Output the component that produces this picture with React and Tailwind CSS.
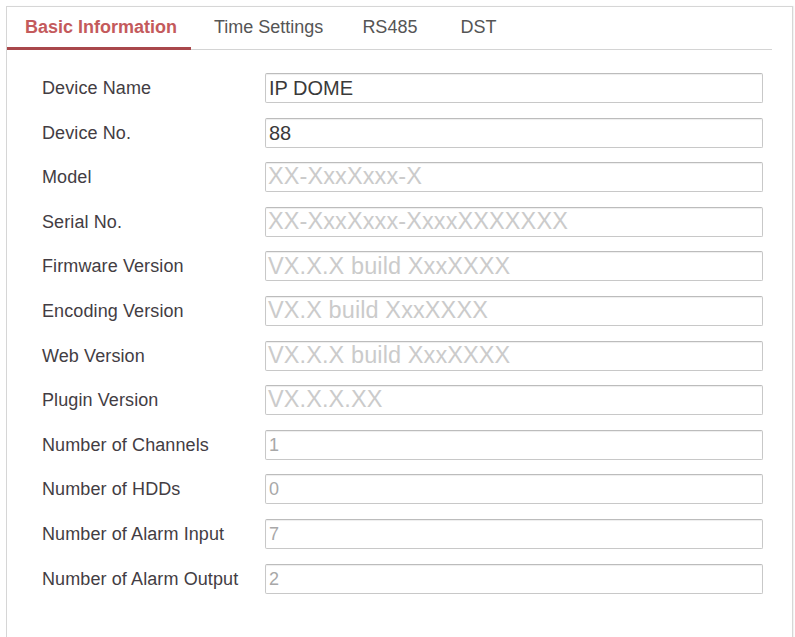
import { useState } from 'react';

const tabs = [
  { name: 'Basic Information', gap: 'ml-0' },
  { name: 'Time Settings', gap: 'ml-[23px]' },
  { name: 'RS485', gap: 'ml-[39px]' },
  { name: 'DST', gap: 'ml-[43px]' },
];

// kind: value = editable text, info = greyed placeholder, count = small greyed number
const fields = [
  { label: 'Device Name', value: 'IP DOME', kind: 'value' },
  { label: 'Device No.', value: '88', kind: 'value' },
  { label: 'Model', value: 'XX-XxxXxxx-X', kind: 'info' },
  { label: 'Serial No.', value: 'XX-XxxXxxx-XxxxXXXXXXX', kind: 'info' },
  { label: 'Firmware Version', value: 'VX.X.X build XxxXXXX', kind: 'info' },
  { label: 'Encoding Version', value: 'VX.X build XxxXXXX', kind: 'info' },
  { label: 'Web Version', value: 'VX.X.X build XxxXXXX', kind: 'info' },
  { label: 'Plugin Version', value: 'VX.X.X.XX', kind: 'info' },
  { label: 'Number of Channels', value: '1', kind: 'count' },
  { label: 'Number of HDDs', value: '0', kind: 'count' },
  { label: 'Number of Alarm Input', value: '7', kind: 'count' },
  { label: 'Number of Alarm Output', value: '2', kind: 'count' },
];

const valueStyles = {
  value: 'text-[20px] text-[#3a3a3a] pl-[3px]',
  info: 'text-[23.5px] text-[#cbcbcb] pl-[2px] tracking-[0.1px]',
  count: 'text-[18px] text-[#a8a8a8] pl-[3px]',
};

function App() {
  const [active, setActive] = useState(0);

  return (
    <div className="w-[795px] h-[637px] bg-white pt-[6px] pl-[6px] pr-[2px] font-['Liberation_Sans',Arial,sans-serif]">
      <div className="h-[631px] border border-b-0 border-[#d6d6d6] shadow-[1px_0_1px_rgba(0,0,0,0.05)]">
        {/* Tab bar */}
        <div className="flex h-[43px] mr-[20px] border-b border-[#d4d4d4]">
          {tabs.map((tab, i) => (
            <button
              key={tab.name}
              onClick={() => setActive(i)}
              className={`relative flex items-center pt-[1px] pb-[3px] text-[18px] leading-none ${tab.gap} ${
                i === active
                  ? "w-[184px] pl-[18px] font-bold text-[#c45a5c] text-[17.5px]"
                  : 'text-[#555555]'
              }`}
            >
              {tab.name}
              {i === active && (
                <span className="absolute left-0 right-0 bottom-[-1px] h-[3px] bg-[#a9474b]" />
              )}
            </button>
          ))}
        </div>

        {/* Form */}
        <div className="flex flex-col gap-[14.6px] pt-[23px] pl-[35px] pr-[29px]">
          {fields.map((f) => (
            <div key={f.label} className="flex items-center h-[30px]">
              <div className="w-[223px] shrink-0 text-[18px] text-[#433d43] leading-none tracking-[0.1px]">{f.label}</div>
              <div className="flex-1 h-[30px] flex items-center border border-[#c8c8c8] border-t-[#bcbcbc] rounded-[2px] shadow-[inset_0_1px_1px_rgba(0,0,0,0.07)] overflow-hidden">
                <span className={`leading-none whitespace-nowrap ${valueStyles[f.kind]}`}>{f.value}</span>
              </div>
            </div>
          ))}
        </div>
      </div>
    </div>
  );
}

export default App;
